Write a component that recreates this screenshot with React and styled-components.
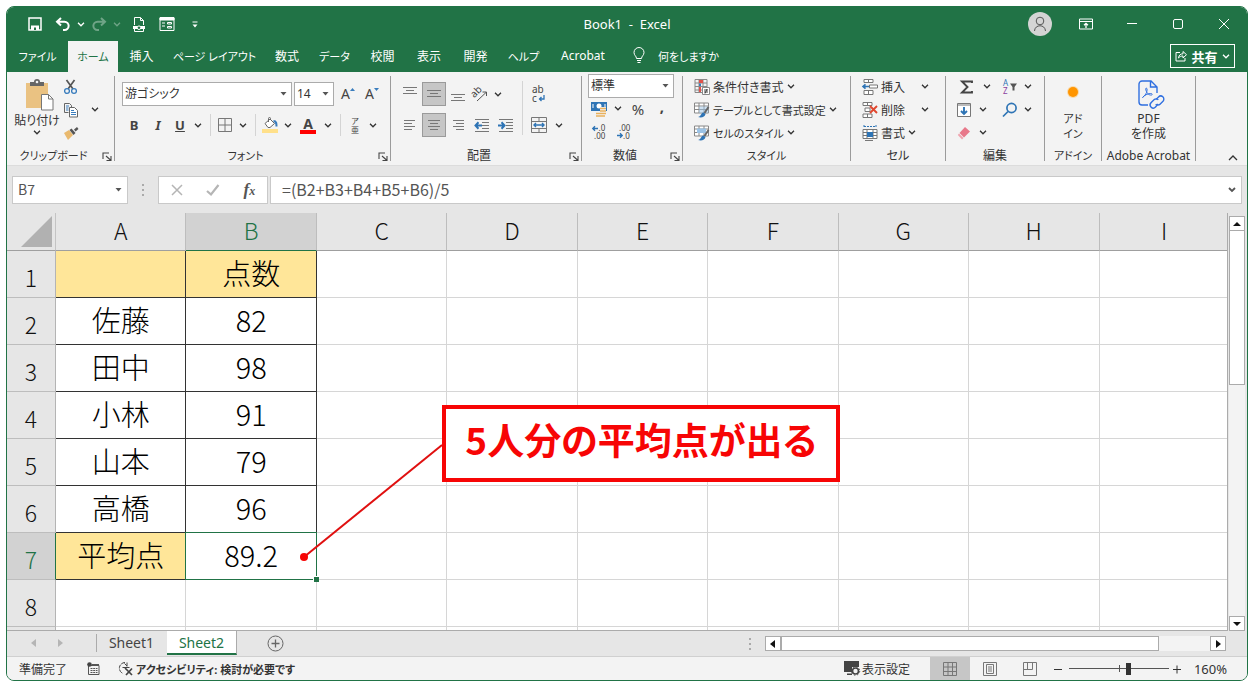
import React from "react";
import styled, { createGlobalStyle, css } from "styled-components";

const GREEN = "#217346";
const UI = `"Noto Sans", "Noto Sans CJK JP", sans-serif`;
const SHEET = `"Noto Sans CJK JP", "Noto Sans", sans-serif`;

const Global = createGlobalStyle`
  * { box-sizing: border-box; }
  body { margin: 0; background: #fff; font-family: ${UI}; font-size: 12px; color: #333; font-feature-settings: "palt"; }
  button, input, select { font: inherit; font-feature-settings: inherit; color: inherit; }
  svg { display: block; flex: none; overflow: visible; }
`;

const Window = styled.div`
  margin: 6px;
  border: 1px solid ${GREEN};
  border-radius: 8px;
  overflow: hidden;
  background: #e6e6e6;
`;

const Plain = styled.button`
  border: 0;
  padding: 0;
  background: none;
  display: flex;
  align-items: center;
  justify-content: center;
  white-space: nowrap;
`;

/* ---------- title bar ---------- */
const TitleBar = styled.header`
  display: grid;
  grid-template-columns: 1fr auto 1fr;
  align-items: center;
  height: 34px;
  background: ${GREEN};
  color: #fff;
`;
const QuickAccess = styled.div`
  display: flex;
  align-items: center;
  padding-left: 18px;
`;
const QuickButton = styled(Plain)`
  width: ${(p) => p.$w || 20}px;
  height: 24px;
  margin-right: ${(p) => p.$gap || 0}px;
  opacity: ${(p) => (p.disabled ? 0.35 : 1)};
  color: #fff;
`;
const Title = styled.h1`
  margin: 0;
  font-size: 13px;
  line-height: 16px;
  font-weight: 400;
  white-space: pre;
`;
const WindowControls = styled.div`
  display: flex;
  justify-content: flex-end;
  align-items: center;
  height: 32px;
`;
const ControlButton = styled(Plain)`
  width: 46px;
  height: 30px;
  color: #fff;
`;
const Avatar = styled.span`
  width: 24px;
  height: 24px;
  border-radius: 50%;
  background: #d4d4d4;
  color: #555;
  display: flex;
  align-items: center;
  justify-content: center;
`;

/* ---------- ribbon tabs ---------- */
const TabBar = styled.nav`
  display: flex;
  align-items: stretch;
  height: 31px;
  background: ${GREEN};
  color: #fff;
`;
const Tab = styled(Plain)`
  width: ${(p) => p.$w}px;
  padding-bottom: 2px;
  color: ${(p) => (p.$active ? GREEN : "#fff")};
  background: ${(p) => (p.$active ? "#f3f3f3" : "none")};
  font-size: ${(p) => (p.$small ? 11 : 12)}px;
`;
const TellMe = styled(Plain)`
  gap: 12px;
  margin-left: 14px;
  padding-bottom: 2px;
  font-size: 11px;
  color: #fff;
`;
const Share = styled(Plain)`
  gap: 4px;
  margin: 3px 12px 4px auto;
  width: 65px;
  border: 1px solid #fff;
  color: #fff;
  font-size: 13px;
  font-weight: 700;
`;

/* ---------- ribbon ---------- */
const Ribbon = styled.section`
  display: flex;
  height: 94px;
  padding-top: 3px;
  background: #f3f3f3;
  border-bottom: 1px solid #dcdcdc;
`;
const Group = styled.div`
  width: ${(p) => p.$w}px;
  flex: none;
  display: flex;
  flex-direction: column;
  padding-right: 1px;
  background: linear-gradient(#9b9b9b, #9b9b9b) right 1px / 1px 85px no-repeat;
`;
const GroupBody = styled.div`
  flex: 1;
  display: flex;
  padding: 0 ${(p) => p.$pad ?? 7}px;
  gap: ${(p) => p.$gap || 0}px;
  justify-content: ${(p) => (p.$center ? "center" : "flex-start")};
`;
const GroupFoot = styled.div`
  display: flex;
  align-items: center;
  height: 18px;
  line-height: 16px;
  font-size: ${(p) => (p.$small ? 11 : 12)}px;
  white-space: nowrap;
`;
const FootLabel = styled.span`
  flex: 1;
  text-align: center;
  min-width: 0;
`;
const Launcher = styled(Plain)`
  width: 14px;
  height: 14px;
  color: #444;
`;
const Stack = styled.div`
  display: flex;
  flex-direction: column;
  padding-top: ${(p) => p.$top || 0}px;
  gap: ${(p) => p.$gap || 0}px;
`;
const Line = styled.div`
  display: flex;
  align-items: center;
  height: ${(p) => p.$h || 23}px;
  gap: ${(p) => p.$gap || 0}px;
`;
const Tool = styled(Plain)`
  width: ${(p) => p.$w || 24}px;
  height: ${(p) => p.$h || 24}px;
  color: #444;
  font-size: ${(p) => p.$size || 13}px;
  ${(p) => p.$on && css`
    background: #c6c6c6;
    border: 1px solid #9a9a9a;
  `}
`;
const Arrow = styled(Plain)`
  width: 16px;
  height: 22px;
  color: #333;
`;
const BigTool = styled(Plain)`
  flex-direction: column;
  justify-content: flex-start;
  gap: ${(p) => p.$gap || 0}px;
  width: ${(p) => p.$w}px;
  padding-top: 4px;
  line-height: 15px;
  font-size: ${(p) => (p.$small ? 11 : 12)}px;
`;
const BigIcon = styled.span`
  display: flex;
  align-items: center;
  height: 32px;
  padding-left: ${(p) => p.$indent || 0}px;
`;
const TextTool = styled(Plain)`
  height: 23px;
  gap: 3px;
  justify-content: flex-start;
  min-width: ${(p) => p.$min || 0}px;
  font-size: ${(p) => (p.$small ? 11 : 12)}px;
`;
const Grow = styled.span`
  flex: 1;
  text-align: left;
`;
const Divider = styled.span`
  width: 1px;
  height: ${(p) => p.$h || 22}px;
  background: #d4d4d4;
  margin: 0 4px;
  flex: none;
`;
const Combo = styled.span`
  position: relative;
  display: flex;
  width: ${(p) => p.$w}px;
  height: 24px;
  border: 1px solid #ababab;
  background: #fff;
  margin-right: 2px;
  select {
    appearance: none;
    border: 0;
    background: none;
    width: 100%;
    padding: 0 2px;
    line-height: 20px;
  }
  svg { position: absolute; right: 4px; top: 9px; pointer-events: none; }
`;
const Collapse = styled(Plain)`
  align-self: flex-end;
  margin: 0 9px 4px auto;
`;

/* ---------- formula bar ---------- */
const FormulaBar = styled.div`
  display: flex;
  align-items: center;
  padding: 10px 5px 9px;
  color: #555;
`;
const Box = styled.div`
  display: flex;
  align-items: center;
  height: 28px;
  width: ${(p) => (p.$w ? p.$w + "px" : "auto")};
  flex: ${(p) => (p.$w ? "none" : 1)};
  border: 1px solid #c9c9c9;
  background: #fff;
  padding-right: 5px;
  input {
    flex: 1;
    min-width: 0;
    height: 24px;
    border: 0;
    padding: 0 0 2px ${(p) => p.$indent || 5}px;
    background: none;
    font-family: "Noto Sans CJK JP", sans-serif;
    font-size: ${(p) => p.$size}px;
    font-feature-settings: normal;
    outline: 0;
  }
`;
const Grip = styled.span`
  width: 30px;
  display: flex;
  justify-content: center;
`;
const FormulaTools = styled(Box)`
  justify-content: space-around;
  padding: 0;
  margin-right: 2px;
`;

/* ---------- sheet ---------- */
const SheetArea = styled.main`
  position: relative;
  display: grid;
  grid-template-columns: minmax(0, 1fr) 20px;
`;
const Viewport = styled.div`
  overflow: hidden;
`;
const Grid = styled.table`
  width: calc(100% + 3px);
  table-layout: fixed;
  border-collapse: separate;
  border-spacing: 0;
  height: 418px;
  background: #fff;
  font-family: ${SHEET};
  font-feature-settings: normal;
  border-bottom: 1px solid #ababab;
`;
const Corner = styled.td`
  width: 49px;
  height: 38px;
  padding: 0;
  background: #e6e6e6;
  border-right: 1px solid #c4c4c4;
  border-bottom: 1px solid #9f9f9f;
  svg { margin: 1px 2px 0 auto; }
`;
const ColHead = styled.th`
  height: 38px;
  padding: 0 0 4px;
  font-weight: 300;
  font-size: 23px;
  line-height: 32px;
  color: ${(p) => (p.$on ? GREEN : "#111")};
  background: ${(p) => (p.$on ? "#d2d2d2" : "#e6e6e6")};
  border-right: 1px solid #bdbdbd;
  border-bottom: 1px solid ${(p) => (p.$on ? GREEN : "#9f9f9f")};
`;
const RowHead = styled.th`
  padding: ${(p) => (p.$cut ? 0 : "6px 0 0")};
  height: ${(p) => (p.$cut ? "3px" : "47px")};
  font-weight: 300;
  font-size: 23px;
  line-height: 34px;
  color: ${(p) => (p.$on ? GREEN : "#111")};
  background: ${(p) => (p.$on ? "#d2d2d2" : "#e6e6e6")};
  border-right: 1px solid ${(p) => (p.$on ? GREEN : "#b4b4b4")};
  border-bottom: ${(p) => (p.$cut ? 0 : "1px solid #bdbdbd")};
`;
const Cell = styled.td`
  position: relative;
  padding: ${(p) => (p.$cut ? 0 : "0 0 4px")};
  text-align: center;
  font-weight: 300;
  font-size: 29px;
  line-height: 40px;
  color: #000;
  background: ${(p) => (p.$fill ? "#ffe699" : "#fff")};
  border-right: 1px solid ${(p) => (p.$data ? "#333" : "#d6d6d6")};
  border-bottom: ${(p) => (p.$cut ? "0" : `1px solid ${p.$data ? "#333" : "#d6d6d6"}`)};
  ${(p) => p.$selected && css`
    z-index: 1;
    &::before {
      content: "";
      position: absolute;
      inset: -1px;
      border: 1px solid ${GREEN};
    }
    &::after {
      content: "";
      position: absolute;
      right: -3px;
      bottom: -3px;
      width: 5px;
      height: 5px;
      border: 1px solid #fff;
      border-right: 0;
      border-bottom: 0;
      background: ${GREEN};
    }
  `}
`;
const VScroll = styled.div`
  display: flex;
  flex-direction: column;
  padding: 3px 2px 0 1px;
  border-left: 1px solid #ababab;
`;
const ScrollButton = styled(Plain)`
  width: 16px;
  height: 15px;
  border: 1px solid #ababab;
  background: #fff;
  color: #111;
  flex: none;
`;
const VTrack = styled.div`
  flex: 1;
  width: 16px;
  background: #f3f3f3;
`;
const VThumb = styled.div`
  height: 40%;
  background: #fff;
  border: 1px solid #ababab;
  border-top: 0;
`;
const Callout = styled.div`
  position: absolute;
  z-index: 2;
  left: 435px;
  top: 192px;
  width: 398px;
  height: 77px;
  display: flex;
  justify-content: center;
  border: 4px solid #f70505;
  background: #fff;
  color: #f70505;
  font-family: ${SHEET};
  font-size: 37px;
  font-weight: 700;
  line-height: 60px;
  white-space: nowrap;
`;
const Pointer = styled.svg`
  position: absolute;
  z-index: 2;
  left: 290px;
  top: 228px;
`;

/* ---------- sheet tabs + status ---------- */
const SheetBar = styled.div`
  display: flex;
  height: 26px;
  border-bottom: 1px solid #d0d0d0;
`;
const SheetNav = styled.div`
  display: flex;
  align-items: center;
  gap: 18px;
  width: 90px;
  padding-left: 23px;
  margin: 3px 0 4px;
  border-right: 1px solid #ababab;
  color: #b5b5b5;
`;
const SheetTab = styled(Plain)`
  width: 70px;
  height: 24px;
  font-size: 14px;
  color: ${(p) => (p.$on ? GREEN : "#444")};
  background: ${(p) => (p.$on ? "#fff" : "none")};
  border-bottom: 2px solid ${(p) => (p.$on ? GREEN : "transparent")};
  border-right: 1px solid ${(p) => (p.$on ? "#ababab" : "transparent")};
`;
const AddSheet = styled(Plain)`
  width: 76px;
  color: #666;
`;
const HScroll = styled.div`
  display: flex;
  align-items: center;
  margin-left: auto;
  width: 512px;
  padding-right: 21px;
`;
const HTrack = styled.div`
  flex: 1;
  background: #f3f3f3;
`;
const HThumb = styled.div`
  width: 88%;
  height: 15px;
  background: #fff;
  border: 1px solid #ababab;
`;
const StatusBar = styled.footer`
  display: flex;
  align-items: center;
  height: 23px;
  padding: 0 20px 0 12px;
  background: #f3f3f3;
`;
const StatusText = styled.span`
  margin-right: 20px;
`;
const StatusButton = styled(Plain)`
  gap: 2px;
  margin-right: ${(p) => p.$gap || 0}px;
  font-size: ${(p) => (p.$small ? 11 : 12)}px;
  font-weight: ${(p) => (p.$bold ? 700 : 400)};
`;
const StatusRight = styled.div`
  display: flex;
  align-items: center;
  margin-left: auto;
`;
const ViewButton = styled(Plain)`
  width: 40px;
  height: 23px;
  color: #555;
  background: ${(p) => (p.$on ? "#c6c6c6" : "none")};
`;
const Zoom = styled.input`
  appearance: none;
  width: 100px;
  height: 14px;
  margin: 0 3px;
  background: linear-gradient(#555, #555) center / 100% 1px no-repeat,
    linear-gradient(#555, #555) 50px 50% / 1px 7px no-repeat;
  &::-webkit-slider-thumb {
    appearance: none;
    width: 5px;
    height: 12px;
    background: #333;
  }
`;
const ZoomValue = styled.output`
  width: 45px;
  text-align: right;
  font-size: 13px;
`;

/* ---------- icons ---------- */
const Svg = ({ w = 16, h, box, children, ...rest }) => (
  <svg width={w} height={h || w} viewBox={box || `0 0 ${w} ${h || w}`} fill="none" stroke="currentColor" aria-hidden="true" {...rest}>
    {children}
  </svg>
);
const Chevron = () => <Svg w={8} h={5} strokeWidth="1.3"><path d="M1 .8 4 3.8 7 .8" /></Svg>;
const Caret = () => <Svg w={7} h={4} stroke="none" fill="#555"><path d="M.5 0h6L3.500 3.500z" /></Svg>;
const Dots = () => <Svg w={3} h={12} stroke="none" fill="#aaa"><path d="M0 0h2v2H0zM0 5h2v2H0zM0 10h2v2H0z" /></Svg>;
const LaunchIcon = () => <Svg w={10} h={9} strokeWidth="1.1"><path d="M1 7V1h6M4 4l4.500 4M9 4v4.500H4.500" /></Svg>;

const bars = (list) => list.map(([x1, x2, y], i) => <path key={i} d={`M${x1} ${y}.5H${x2}`} />);
const AlignIcon = ({ kind }) => {
  const shapes = {
    top: [[1, 15, 1], [4, 12, 4], [1, 15, 7]],
    middle: [[1, 15, 4], [4, 12, 7], [1, 15, 10]],
    bottom: [[1, 15, 8], [4, 12, 11], [1, 15, 14]],
    left: [[2, 13, 3], [2, 10, 6], [2, 13, 9], [2, 10, 12]],
    center: [[2, 14, 3], [4, 12, 6], [2, 14, 9], [4, 12, 12]],
    right: [[3, 14, 3], [6, 14, 6], [3, 14, 9], [6, 14, 12]],
  };
  return <Svg stroke="#777">{bars(shapes[kind])}</Svg>;
};
const IndentIcon = ({ out }) => (
  <Svg>
    <g stroke="#777">{bars([[1, 15, 2], [8, 15, 5], [8, 15, 8], [8, 15, 11], [1, 15, 14]])}</g>
    <path stroke="#2e74b5" strokeWidth="2" d={out ? "M8 8.500H1.500M4.500 5.300 1.500 8.500l3 3.200" : "M0 8.500h6.500M3.500 5.300 6.500 8.500l-3 3.200"} />
  </Svg>
);
const SaveIcon = () => <Svg w={14} strokeWidth="1.500"><path d="M1 1h12v12H1z" /><path d="M3 8.500h8V13H3z" fill="currentColor" stroke="none" /><path d="M6 10.500h2V13H6z" fill={GREEN} stroke="none" /></Svg>;
const UndoIcon = ({ flip }) => <Svg w={16} h={14} strokeWidth="2"><path transform={flip ? "matrix(-1 0 0 1 16 0)" : undefined} d="M6 1 2 4.700l4 3.700M2.500 4.700H9.500a4 4 0 0 1 0 8.300H8" /></Svg>;
const PageIcon = () => <Svg w={14} h={16}><path d="M2.500 9V1.500h6l3 3V9M8.500 1.500v3h3" /><path d="M1 10h12v3H1z" fill="currentColor" stroke="none" /><path d="M2.500 12v3.500h9V12" /><circle cx="7" cy="11.700" r="1.800" fill={GREEN} /></Svg>;
const FormIcon = () => <Svg w={16} h={14}><path d="M1 .5h14v13H1z" /><path d="M1 1h14v2H1z" fill="currentColor" /><path d="M3 6h3M3 9h3M8.500 5.500h4v1.500h-4zM8.500 9.500h4V11h-4z" /></Svg>;
const MoreIcon = () => <Svg w={6} h={7}><path d="M.5 1h5" /><path d="M.5 3.500h5L3 6.500z" fill="currentColor" stroke="none" /></Svg>;
const UserIcon = () => <Svg w={16} h={18}><circle cx="8" cy="6" r="3.800" /><path d="M2.500 16c.3-7 10.700-7 11 0" /></Svg>;
const RibbonIcon = () => <Svg w={14} h={12}><path d="M.5 1h13v10H.5zM.5 3.500h13" /><path d="M7 10V5.500M5 7.300l2-2 2 2" strokeWidth="1.300" /></Svg>;
const BulbIcon = () => <Svg w={14} h={17}><path d="M4.500 11.500C4.500 9 2 8.500 2 5.500a5 5 0 0 1 10 0c0 3-2.500 3.500-2.500 6zM5 13.500h4M5.500 15.500h3" /></Svg>;
const ShareIcon = () => <Svg w={12}><path d="M5 2.500H1v8.500h9V8" /><path d="M3.500 8c.4-3 2-4.200 4.500-4.200V1.500L11.500 4.700 8 8V6C6 6 4.800 6.500 3.500 8z" /></Svg>;

const PasteIcon = () => (
  <Svg w={28} h={32} stroke="none">
    <path d="M0 4h22v25H0z" fill="#eac282" />
    <path d="M4 7V3h4a3 3 0 0 1 6 0h4v4z" fill="#666" /><circle cx="11" cy="3" r="1.300" fill="#f3f3f3" />
    <path d="M15.500 15.500h7l4.500 4.500v11h-11.500z" fill="#fff" stroke="#777" /><path d="M22.500 15.500V20H27" stroke="#777" />
  </Svg>
);
const CutIcon = () => <Svg><path d="M3.500 1 10 10M11.500 1 5 10" stroke="#555" strokeWidth="1.700" /><circle cx="4" cy="12" r="2.400" stroke="#3a7dbd" strokeWidth="1.300" /><circle cx="11" cy="12" r="2.400" stroke="#3a7dbd" strokeWidth="1.300" /></Svg>;
const CopyIcon = () => <Svg stroke="#666"><path d="M5.500 10.500h-4v-9h5l2 2v2" /><path d="M6.500 5.500h5l3 3v6.500h-8z" fill="#fff" /><path d="M3 4h3M3 6h2.500M3 8h2.500M8 8.500h3M8 10.500h5M8 12.500h5" stroke="#3a7dbd" /></Svg>;
const BrushIcon = () => <Svg stroke="none"><path d="M1 8 6 5l4 5-5 5z" fill="#e9b96e" /><path d="M6.500 5 8.500 3.500l4 4.500L10.500 10z" fill="#555" /><path d="m11 4.500 3-2.500 1.500 2-3 2.500z" fill="#555" /></Svg>;
const BorderIcon = () => <Svg w={14} stroke="#777"><path d="M.5.5h13v13H.5zM7 .5v13M.5 7h13" /></Svg>;
const FillIcon = () => <Svg><path d="M0 12h16v4H0z" fill="#ffe08a" stroke="none" /><path d="M3 6.500 8 2l4.500 4.500L8 10.500H6z" fill="#fff" stroke="#666" /><path d="M6.500 5V1.500a1 1 0 0 1 2 0V3" stroke="#666" /><path d="M11.500 4c3 0 3 2.500 3 5.500" stroke="#3a7dbd" strokeWidth="2" /></Svg>;
const FontColor = styled.span`
  font-size: 14px;
  line-height: 13px;
  font-weight: 700;
  width: 16px;
  border-bottom: 4px solid #f00;
`;
const Ruby = styled.span`
  display: flex;
  flex-direction: column;
  font-size: 8px;
  line-height: 9px;
`;
const SizeA = styled.span`
  font-size: 14px;
  line-height: 16px;
`;
const CommaMark = styled.b`
  padding-bottom: 6px;
  line-height: 12px;
`;
const SizeMark = ({ down }) => <Svg w={5} h={12} stroke="none" fill="#3a7dbd"><path d={down ? "M0 0h5L2.500 3z" : "M0 3h5L2.500 0z"} /></Svg>;
const OrientIcon = () => <Svg><text x="0" y="9" fontSize="10" fill="#444" stroke="none" transform="rotate(-45 5 8)">ab</text><path d="M5 15 14 6.500M10.500 6H14.500V10" stroke="#555" /></Svg>;
const WrapText = styled.span`
  display: flex;
  flex-direction: column;
  width: 14px;
  font-size: 10px;
  line-height: 9px;
  text-align: left;
`;
const WrapRow = styled.span`
  display: flex;
  gap: 2px;
`;
const WrapIcon = () => <WrapText><span>ab</span><WrapRow>c<Svg w={6} h={9}><path d="M5 1v4H.500M2.500 3l-2 2 2 2" stroke="#2e74b5" strokeWidth="1.300" /></Svg></WrapRow></WrapText>;
const MergeIcon = () => <Svg stroke="#777"><path d="M.5.5h15v15H.5zM.5 4.500h15M.5 11.500h15M8 .5V4M8 12v3.500" /><path d="M3 8h10M5 6 3 8l2 2M11 6l2 2-2 2" stroke="#2e74b5" strokeWidth="1.400" /></Svg>;
const MoneyIcon = () => <Svg><path d="M0 1h16v9H0z" fill="#2e74b5" stroke="none" /><circle cx="8" cy="5" r="2.500" fill="#fff" stroke="none" /><path d="M2 3v4M14 3v4" stroke="#fff" /><path d="M9 6h6v9H9z" fill="#f3f3f3" stroke="none" /><path d="M9 7.500h6M9 10h6M9 12.500h6M5 12.500h4M5 15h9" stroke="#e9b15c" strokeWidth="1.700" /></Svg>;
const DecimalIcon = ({ inc }) => (
  <Svg w={16} h={15}>
    {inc ? (
      <>
        <path d="M6 4.500H1M3 2.300.8 4.500 3 6.700" stroke="#2e74b5" strokeWidth="1.400" />
        <text x="6.500" y="7" fontSize="8" fill="#444" stroke="none">.0</text>
        <text x="2" y="15" fontSize="8" fill="#444" stroke="none">.00</text>
      </>
    ) : (
      <>
        <text x="3" y="7" fontSize="8" fill="#444" stroke="none">.00</text>
        <path d="M1 11.500h5M4 9.300l2.200 2.200L4 13.700" stroke="#2e74b5" strokeWidth="1.400" />
        <text x="7" y="15" fontSize="8" fill="#444" stroke="none">.0</text>
      </>
    )}
  </Svg>
);
const CondIcon = () => <Svg stroke="#888"><path d="M1 .5h12v13H1zM1 4h12M1 7.500h12M1 11h12M5 .5v13M9 .5v13" /><path d="M5 1h4v3H5zM5 8h2v5H5z" fill="#e0524a" stroke="none" /><path d="M5 4.500h2V7H5z" fill="#3a7dbd" stroke="none" /><path d="M8.500 8.500h7v7h-7z" fill="#fff" /><path d="M10 11h4M10 13h4M13 10l-2 4.500" stroke="#444" /></Svg>;
const TableIcon = ({ cell }) => <Svg stroke="#888"><path d="M.5 1h14v10H.5zM.5 4h14M.5 7.500h14M5 1v10M10 1v10" fill="#fff" />{cell ? <path d="M3 3.500h9v4.500H3z" fill="#9cc3e6" stroke="none" /> : <path d="M5 4.500h9.500V11H5z" fill="#9cc3e6" stroke="none" opacity=".5" />}<path d="m14.500 5-4 6" stroke="#666" strokeWidth="2" /><path d="M4 15c3 0 2.500-4 5.500-4.500l2 1.500c-.5 3-4 4-7.500 3z" fill="#2e74b5" stroke="none" /></Svg>;
const InsertIcon = () => <Svg stroke="#777"><path d="M2 .5h9v3H2zM6.500 .5v3M2 11.500h9v4H2zM6.500 11.500v4M7.500 6h8v3h-8z" fill="#fff" /><path d="M7 7.500H1M3.500 5.300 1 7.500l2.500 2.200" stroke="#2e74b5" strokeWidth="1.600" /></Svg>;
const DeleteIcon = () => <Svg stroke="#777"><path d="M1 .5h9v3H1zM5.500 .5v3M1 12h9v3.500H1zM5.500 12v3.500M3 6h5v3.500H3z" fill="#fff" /><path d="M8 4l7 7M15 4l-7 7" stroke="#e0472f" strokeWidth="1.900" /></Svg>;
const FormatIcon = () => <Svg stroke="#777"><path d="M2 1.500h12M2 0v3M14 0v3" stroke="#2e74b5" strokeDasharray="2 1" /><path d="M1 4.500h14v9H1zM1 7.500h14M1 10.500h14M5 4.500v9M11 4.500v9" fill="#fff" /><path d="M5 7h6v5H5z" fill="#2e74b5" stroke="none" /><path d="M3 15.500h8" /></Svg>;
const SumIcon = () => <Svg w={13} h={14} strokeWidth="1.900" stroke="#444"><path d="M12 3V1.500H2L7.500 7 2 12.500h10V11" /></Svg>;
const SortIcon = () => <Svg w={15} h={16}><text x="0" y="7" fontSize="8" fill="#2e74b5" stroke="none">A</text><text x="0" y="15" fontSize="8" fill="#8a3fa0" stroke="none">Z</text><path d="M7 4.500h7L11.500 8v3.500H9.500V8z" fill="#555" stroke="none" /></Svg>;
const DownIcon = () => <Svg w={14} stroke="#777"><path d="M.5.5h13v13H.5z" fill="#fff" /><path d="M1 2h12" /><path d="M7 4v7M4 8l3 3 3-3" stroke="#2e74b5" strokeWidth="1.900" /></Svg>;
const FindIcon = () => <Svg stroke="#2e74b5" strokeWidth="1.700"><circle cx="9.500" cy="6" r="4.600" /><path d="M6 9.500 1 14.500" /></Svg>;
const EraserIcon = () => <Svg w={14} h={14} stroke="none"><path d="m8 1 5 4.500-6 6L2.500 7z" fill="#e8788a" /><path d="m2 7.500 4.500 4.500-1.500 1.500L.8 9z" fill="#f0a3ae" /></Svg>;
const PdfIcon = () => (
  <Svg w={28} h={30} stroke="#2f6fe0" strokeWidth="1.400">
    <path d="M11 25H5a3 3 0 0 1-3-3V4a3 3 0 0 1 3-3h9l6 6v6M13.500 1v6H20" />
    <path d="M5.500 17.500c2.500-1.500 5-5.500 4.500-8.500-.3-1.500-1.700-1-1.300.5.8 3.200 3 6 5.800 5.500 1.500-.5.500-1.700-1-1.500-3 .3-6 1.500-8 4z" strokeWidth="1" />
    <path d="m19 19.500 2.500-2.500a3 3 0 0 1 4.500 4.200l-3 3a3 3 0 0 1-4.300 0M21 24l-2.500 3a3 3 0 0 1-4.500-4.200l3-3a3 3 0 0 1 4.300 0" />
  </Svg>
);
const AddinIcon = () => <Svg w={14} h={20} stroke="none"><circle cx="7" cy="7" r="6" fill="#ffc163" opacity=".5" /><circle cx="7" cy="7" r="5" fill="#ff9500" /></Svg>;
const FxMark = styled.span`
  font-family: "Liberation Serif", serif;
  font-style: italic;
  font-weight: 700;
  font-size: 17px;
  small { font-size: 12px; }
`;
const Tri = ({ dir }) => {
  const d = { left: "M6 0v8L1 4z", right: "M2 0v8l5-4z", up: "M0 6h8L4 2z", down: "M0 2h8L4 6z" }[dir];
  return <Svg w={8} stroke="none" fill="currentColor"><path d={d} /></Svg>;
};
const MacroIcon = () => <Svg w={13} h={13} stroke="#555"><path d="M1.500 3.500h10.500v9H1.500z" /><path d="M3.500 6.500h7M3.500 8.500h7M3.500 10.500h7" strokeDasharray="2 .7" /><path d="M5 2h7v2H5z" fill="#555" stroke="none" /><circle cx="2.500" cy="2.500" r="2.300" fill="#444" stroke="none" /></Svg>;
const AccessIcon = () => <Svg w={16} h={15} stroke="#444"><path d="M7 1.500A5.700 5.700 0 0 0 5 12.500" strokeDasharray="4 1" /><path d="M4.500 6.500h7M9 1.500v4M6.500 2.500 9 5" /><path d="M7 7l7 7M14 7.500l-6 6.500" strokeWidth="1.700" /></Svg>;
const DisplayIcon = () => <Svg w={16} h={15} stroke="none"><path d="M0 0h15v6H8v5H0z" fill="#444" /><path d="M3 12.500h5V14H3z" fill="#444" /><circle cx="11.500" cy="10" r="3" stroke="#444" strokeWidth="1.600" /><circle cx="11.500" cy="10" r="4.200" stroke="#444" strokeDasharray="1.500 1.800" /></Svg>;
const NormalView = () => <Svg w={14} stroke="#777"><path d="M.5.5h13v13H.5zM.5 5h13M.5 9.500h13M5 .5v13M9.500 .5v13" /></Svg>;
const PageView = () => <Svg w={14} stroke="#777"><path d="M.5.5h13v13H.5zM3.500 2.500h7v9h-7zM5 5h4M5 7h4M5 9h4" /></Svg>;
const BreakView = () => <Svg w={14} stroke="#777"><path d="M.5.5h13v13H.5zM4.500 .5v7M9.500 .5v7H.500" /></Svg>;

/* ---------- small compositions ---------- */
const Split = ({ label, w = 20, children }) => (
  <>
    <Tool $w={w} aria-label={label}>{children}</Tool>
    <Arrow aria-label={`${label} オプション`}><Chevron /></Arrow>
  </>
);
const RibbonGroup = ({ w, label, small, launch, children, ...body }) => (
  <Group $w={w}>
    <GroupBody {...body}>{children}</GroupBody>
    <GroupFoot $small={small}>
      <FootLabel>{label}</FootLabel>
      {launch && <Launcher aria-label={`${label}の設定`}><LaunchIcon /></Launcher>}
    </GroupFoot>
  </Group>
);

const tabs = [
  ["ファイル", 61, 1], ["ホーム", 50, 1], ["挿入", 47, 0], ["ページ レイアウト", 99, 1], ["数式", 46, 0],
  ["データ", 49, 1], ["校閲", 47, 0], ["表示", 46, 0], ["開発", 47, 0], ["ヘルプ", 49, 1], ["Acrobat", 70, 0],
];
const columns = ["A", "B", "C", "D", "E", "F", "G", "H", "I"];
const rows = [
  ["", "点数"], ["佐藤", "82"], ["田中", "98"], ["小林", "91"], ["山本", "79"], ["高橋", "96"], ["平均点", "89.2"], ["", ""],
];
const isFilled = (r, c) => (r === 0 && c < 2) || (r === 6 && c === 0);

export default function App() {
  return (
    <Window>
      <Global />
      <TitleBar>
        <QuickAccess>
          <QuickButton $gap={8} aria-label="上書き保存"><SaveIcon /></QuickButton>
          <QuickButton aria-label="元に戻す"><UndoIcon /></QuickButton>
          <QuickButton $w={16} aria-label="元に戻す履歴"><Chevron /></QuickButton>
          <QuickButton disabled aria-label="やり直し"><UndoIcon flip /></QuickButton>
          <QuickButton $w={16} $gap={4} disabled aria-label="やり直し履歴"><Chevron /></QuickButton>
          <QuickButton $gap={8} aria-label="印刷プレビュー"><PageIcon /></QuickButton>
          <QuickButton $gap={8} aria-label="フォーム"><FormIcon /></QuickButton>
          <QuickButton aria-label="クイック アクセスのカスタマイズ"><MoreIcon /></QuickButton>
        </QuickAccess>
        <Title>{"Book1  -  Excel"}</Title>
        <WindowControls>
          <ControlButton aria-label="アカウント"><Avatar><UserIcon /></Avatar></ControlButton>
          <ControlButton aria-label="リボンの表示オプション"><RibbonIcon /></ControlButton>
          <ControlButton aria-label="最小化"><Svg w={10} h={2}><path d="M0 .5h10" /></Svg></ControlButton>
          <ControlButton aria-label="最大化"><Svg w={10}><rect x=".5" y=".5" width="9" height="9" rx="1.500" /></Svg></ControlButton>
          <ControlButton aria-label="閉じる"><Svg w={10}><path d="M0 0l10 10M10 0 0 10" /></Svg></ControlButton>
        </WindowControls>
      </TitleBar>

      <TabBar>
        {tabs.map(([name, w, small]) => (
          <Tab key={name} $w={w} $small={small} $active={name === "ホーム"}>{name}</Tab>
        ))}
        <TellMe><BulbIcon />何をしますか</TellMe>
        <Share><ShareIcon />共有<Chevron /></Share>
      </TabBar>

      <Ribbon>
        <RibbonGroup w={108} label="クリップボード" small launch $pad={8}>
          <BigTool $w={44} $gap={2}>
            <BigIcon $indent={5}><PasteIcon /></BigIcon>
            貼り付け
            <Chevron />
          </BigTool>
          <Stack>
            <Line><Tool $h={20} aria-label="切り取り"><CutIcon /></Tool></Line>
            <Line $gap={4}><Tool $h={20} aria-label="コピー"><CopyIcon /></Tool><Arrow aria-label="コピーのオプション"><Chevron /></Arrow></Line>
            <Line><Tool $h={20} aria-label="書式のコピー"><BrushIcon /></Tool></Line>
          </Stack>
        </RibbonGroup>

        <RibbonGroup w={276} label="フォント" small launch>
          <Stack $top={7} $gap={7}>
            <Line $h={24}>
              <Combo $w={170}><select aria-label="フォント名"><option>游ゴシック</option></select><Caret /></Combo>
              <Combo $w={40}><select aria-label="フォント サイズ"><option>14</option></select><Caret /></Combo>
              <Tool aria-label="フォント サイズの拡大"><SizeA>A</SizeA><SizeMark /></Tool>
              <Tool aria-label="フォント サイズの縮小"><SizeA>A</SizeA><SizeMark down /></Tool>
            </Line>
            <Line $h={24}>
              <Tool aria-label="太字"><b>B</b></Tool>
              <Tool aria-label="斜体"><b><i>I</i></b></Tool>
              <Split label="下線"><b><u>U</u></b></Split>
              <Divider />
              <Split label="罫線"><BorderIcon /></Split>
              <Divider />
              <Split label="塗りつぶしの色"><FillIcon /></Split>
              <Split label="フォントの色" w={24}><FontColor>A</FontColor></Split>
              <Divider />
              <Split label="ふりがなの表示"><Ruby><span>ア</span><span>亜</span></Ruby></Split>
            </Line>
          </Stack>
        </RibbonGroup>

        <RibbonGroup w={191} label="配置" launch>
          <Stack $top={7} $gap={7}>
            <Line $h={24}>
              <Tool aria-label="上揃え"><AlignIcon kind="top" /></Tool>
              <Tool $on aria-label="上下中央揃え"><AlignIcon kind="middle" /></Tool>
              <Tool aria-label="下揃え"><AlignIcon kind="bottom" /></Tool>
              <Split label="方向"><OrientIcon /></Split>
            </Line>
            <Line $h={24}>
              <Tool aria-label="左揃え"><AlignIcon kind="left" /></Tool>
              <Tool $on aria-label="中央揃え"><AlignIcon kind="center" /></Tool>
              <Tool aria-label="右揃え"><AlignIcon kind="right" /></Tool>
              <Tool aria-label="インデントを減らす"><IndentIcon out /></Tool>
              <Tool aria-label="インデントを増やす"><IndentIcon /></Tool>
            </Line>
          </Stack>
          <Line $h={66}><Divider $h={54} /></Line>
          <Stack $top={7} $gap={7}>
            <Line $h={24}><Tool aria-label="折り返して全体を表示する"><WrapIcon /></Tool></Line>
            <Line $h={24}><Split label="セルを結合して中央揃え" w={24}><MergeIcon /></Split></Line>
          </Stack>
        </RibbonGroup>

        <RibbonGroup w={101} label="数値" launch $pad={6}>
          <Stack>
            <Line $h={22}><Combo $w={86}><select aria-label="表示形式"><option>標準</option></select><Caret /></Combo></Line>
            <Line>
              <Split label="通貨表示形式" w={22}><MoneyIcon /></Split>
              <Tool $size={15} aria-label="パーセント スタイル">%</Tool>
              <Tool $size={15} aria-label="桁区切りスタイル"><CommaMark>,</CommaMark></Tool>
            </Line>
            <Line>
              <Tool aria-label="小数点以下の表示桁数を増やす"><DecimalIcon inc /></Tool>
              <Tool aria-label="小数点以下の表示桁数を減らす"><DecimalIcon /></Tool>
            </Line>
          </Stack>
        </RibbonGroup>

        <RibbonGroup w={168} label="スタイル" small $pad={11}>
          <Stack>
            <TextTool><CondIcon />条件付き書式<Chevron /></TextTool>
            <TextTool $small><TableIcon />テーブルとして書式設定<Chevron /></TextTool>
            <TextTool $small><TableIcon cell />セルのスタイル<Chevron /></TextTool>
          </Stack>
        </RibbonGroup>

        <RibbonGroup w={95} label="セル" $pad={11}>
          <Stack>
            <TextTool $min={67}><InsertIcon /><Grow>挿入</Grow><Chevron /></TextTool>
            <TextTool $min={67}><DeleteIcon /><Grow>削除</Grow><Chevron /></TextTool>
            <TextTool><FormatIcon />書式<Chevron /></TextTool>
          </Stack>
        </RibbonGroup>

        <RibbonGroup w={99} label="編集" $gap={5}>
          <Stack>
            <Line><Split label="オート SUM" w={26}><SumIcon /></Split></Line>
            <Line><Split label="フィル" w={22}><DownIcon /></Split></Line>
            <Line><Split label="クリア" w={22}><EraserIcon /></Split></Line>
          </Stack>
          <Stack>
            <Line><Split label="並べ替えとフィルター"><SortIcon /></Split></Line>
            <Line><Split label="検索と選択"><FindIcon /></Split></Line>
          </Stack>
        </RibbonGroup>

        <RibbonGroup w={57} label="アドイン" small $pad={0} $center>
          <BigTool $w={44} $small><BigIcon><AddinIcon /></BigIcon>アド<br />イン</BigTool>
        </RibbonGroup>

        <RibbonGroup w={94} label="Adobe Acrobat" $pad={0} $center>
          <BigTool $w={60}><BigIcon $indent={4}><PdfIcon /></BigIcon>PDF<br />を作成</BigTool>
        </RibbonGroup>
        <Collapse aria-label="リボンを折りたたむ"><Svg w={10} h={6} strokeWidth="1.300"><path d="M1 5l4-4 4 4" /></Svg></Collapse>
      </Ribbon>

      <FormulaBar>
        <Box $w={116} $size={14}><input aria-label="名前ボックス" defaultValue="B7" /><Caret /></Box>
        <Grip><Dots /></Grip>
        <FormulaTools $w={110}>
          <Plain aria-label="キャンセル"><Svg w={12} stroke="#b5b5b5" strokeWidth="1.500"><path d="M1 1l10 10M11 1 1 11" /></Svg></Plain>
          <Plain aria-label="入力"><Svg w={14} h={12} stroke="#b5b5b5" strokeWidth="2.200"><path d="M1 7l4 3.500L12.500 1" /></Svg></Plain>
          <Plain aria-label="関数の挿入"><FxMark>f<small>x</small></FxMark></Plain>
        </FormulaTools>
        <Box $indent={11} $size={16}><input aria-label="数式バー" defaultValue="=(B2+B3+B4+B5+B6)/5" /><Svg w={8} h={6} strokeWidth="1.800"><path d="M1 1l3 3 3-3" /></Svg></Box>
      </FormulaBar>

      <SheetArea>
        <Viewport>
          <Grid>
            <thead>
              <tr>
                <Corner><Svg w={32} h={32} stroke="none" fill="#b1b1b1"><path d="M31 0v31H0z" /></Svg></Corner>
                {columns.map((c) => <ColHead key={c} scope="col" $on={c === "B"}>{c}</ColHead>)}
              </tr>
            </thead>
            <tbody>
              {rows.map((row, r) => (
                <tr key={r}>
                  <RowHead scope="row" $on={r === 6}>{r + 1}</RowHead>
                  {columns.map((c, i) => (
                    <Cell key={c} $data={r < 7 && i < 2} $fill={isFilled(r, i)} $selected={r === 6 && i === 1}>{row[i]}</Cell>
                  ))}
                </tr>
              ))}
              <tr>
                <RowHead $cut />
                {columns.map((c) => <Cell key={c} $cut />)}
              </tr>
            </tbody>
          </Grid>
        </Viewport>
        <VScroll>
          <ScrollButton aria-label="上へスクロール"><Tri dir="up" /></ScrollButton>
          <VTrack><VThumb /></VTrack>
          <ScrollButton aria-label="下へスクロール"><Tri dir="down" /></ScrollButton>
        </VScroll>
        <Pointer width="146" height="124" viewBox="0 0 146 124" aria-hidden="true">
          <path d="M7 116 145 4" stroke="#e01010" strokeWidth="2" />
          <circle cx="7" cy="116" r="4" fill="#f70505" />
        </Pointer>
        <Callout>5人分の平均点が出る</Callout>
      </SheetArea>

      <SheetBar>
        <SheetNav><Tri dir="left" /><Tri dir="right" /></SheetNav>
        <SheetTab>Sheet1</SheetTab>
        <SheetTab $on>Sheet2</SheetTab>
        <AddSheet aria-label="新しいシート"><Svg w={17}><circle cx="8.500" cy="8.500" r="7.500" /><path d="M8.500 4.500v8M4.500 8.500h8" strokeWidth="1.300" /></Svg></AddSheet>
        <HScroll>
          <Grip><Dots /></Grip>
          <ScrollButton aria-label="左へスクロール"><Tri dir="left" /></ScrollButton>
          <HTrack><HThumb /></HTrack>
          <ScrollButton aria-label="右へスクロール"><Tri dir="right" /></ScrollButton>
        </HScroll>
      </SheetBar>

      <StatusBar>
        <StatusText>準備完了</StatusText>
        <StatusButton $gap={18} aria-label="マクロの記録"><MacroIcon /></StatusButton>
        <StatusButton $bold $small><AccessIcon />アクセシビリティ: 検討が必要です</StatusButton>
        <StatusRight>
          <StatusButton $gap={20}><DisplayIcon />表示設定</StatusButton>
          <ViewButton $on aria-label="標準"><NormalView /></ViewButton>
          <ViewButton aria-label="ページ レイアウト"><PageView /></ViewButton>
          <ViewButton aria-label="改ページ プレビュー"><BreakView /></ViewButton>
          <Plain aria-label="縮小"><Svg w={16} h={10}><path d="M4 5.500h8" /></Svg></Plain>
          <Zoom type="range" min="0" max="100" defaultValue="60" aria-label="ズーム" />
          <Plain aria-label="拡大"><Svg w={10}><path d="M1 5.500h8M5 1.500v8" /></Svg></Plain>
          <ZoomValue>160%</ZoomValue>
        </StatusRight>
      </StatusBar>
    </Window>
  );
}
